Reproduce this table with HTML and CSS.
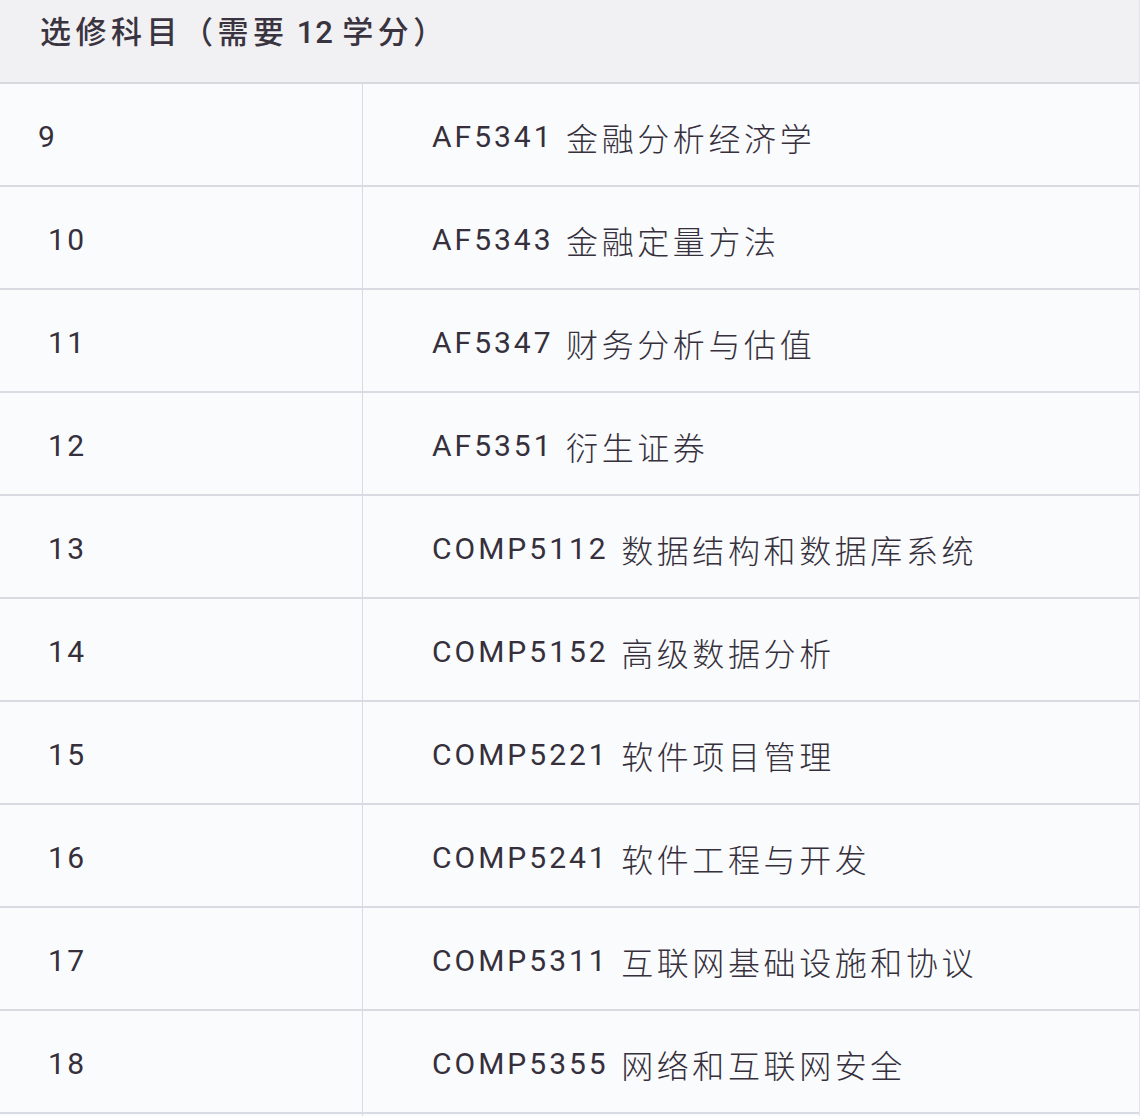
FILE: index.html
```html
<!DOCTYPE html>
<html lang="zh-CN">
<head>
<meta charset="utf-8">
<link rel="stylesheet" href="styles.css">
</head>
<body>
<div class="table">
  <div class="head">选修科目（需要 <span class="lat">12</span> 学分）</div>
  <div class="row"><div class="num first">9</div><div class="course">AF5341 <span class="zh">金融分析经济学</span></div></div>
  <div class="row"><div class="num">10</div><div class="course">AF5343 <span class="zh">金融定量方法</span></div></div>
  <div class="row"><div class="num">11</div><div class="course">AF5347 <span class="zh">财务分析与估值</span></div></div>
  <div class="row"><div class="num">12</div><div class="course">AF5351 <span class="zh">衍生证券</span></div></div>
  <div class="row"><div class="num">13</div><div class="course">COMP5112 <span class="zh">数据结构和数据库系统</span></div></div>
  <div class="row"><div class="num">14</div><div class="course">COMP5152 <span class="zh">高级数据分析</span></div></div>
  <div class="row"><div class="num">15</div><div class="course">COMP5221 <span class="zh">软件项目管理</span></div></div>
  <div class="row"><div class="num">16</div><div class="course">COMP5241 <span class="zh">软件工程与开发</span></div></div>
  <div class="row"><div class="num">17</div><div class="course">COMP5311 <span class="zh">互联网基础设施和协议</span></div></div>
  <div class="row"><div class="num">18</div><div class="course">COMP5355 <span class="zh">网络和互联网安全</span></div></div>
  <div class="row"><div class="num"></div><div class="course"></div></div>
</div>
</body>
</html>
```
FILE: styles.css
```css
html, body {
  margin: 0;
  padding: 0;
  background: #fafbfd;
}
body {
  font-family: "Roboto", "Noto Sans CJK SC", sans-serif;
  color: #35303b;
  width: 1140px;
  height: 1116px;
  overflow: hidden;
}
.table {
  border-right: 1px solid #e3e5ea;
}
.head {
  height: 84px;
  box-sizing: border-box;
  padding: 13px 0 0 40px;
  background: #f1f1f4;
  border-bottom: 2px solid #d6d9de;
  font-size: 31px;
  font-weight: 500;
  letter-spacing: 4.5px;
  word-spacing: -4px;
  line-height: 40px;
  color: #3a3440;
  white-space: pre;
}
.lat {
  letter-spacing: 1px;
}
.row {
  display: flex;
  height: 103px;
  box-sizing: border-box;
  border-bottom: 2px solid #d8dbe1;
}
.num {
  width: 363px;
  box-sizing: border-box;
  border-right: 1px solid #d8dbe1;
  padding-left: 48px;
  padding-top: 4px;
  display: flex;
  align-items: center;
  font-size: 30px;
  letter-spacing: 2.5px;
}
.num.first {
  padding-left: 38px;
}
.course {
  flex: 1;
  padding-left: 69px;
  padding-top: 4px;
  display: flex;
  align-items: center;
  font-size: 30px;
  letter-spacing: 3px;
  word-spacing: 2px;
  white-space: pre;
}
.zh {
  font-family: "Noto Sans CJK SC", sans-serif;
  font-size: 32px;
  font-weight: 300;
  letter-spacing: 3.6px;
}
```
